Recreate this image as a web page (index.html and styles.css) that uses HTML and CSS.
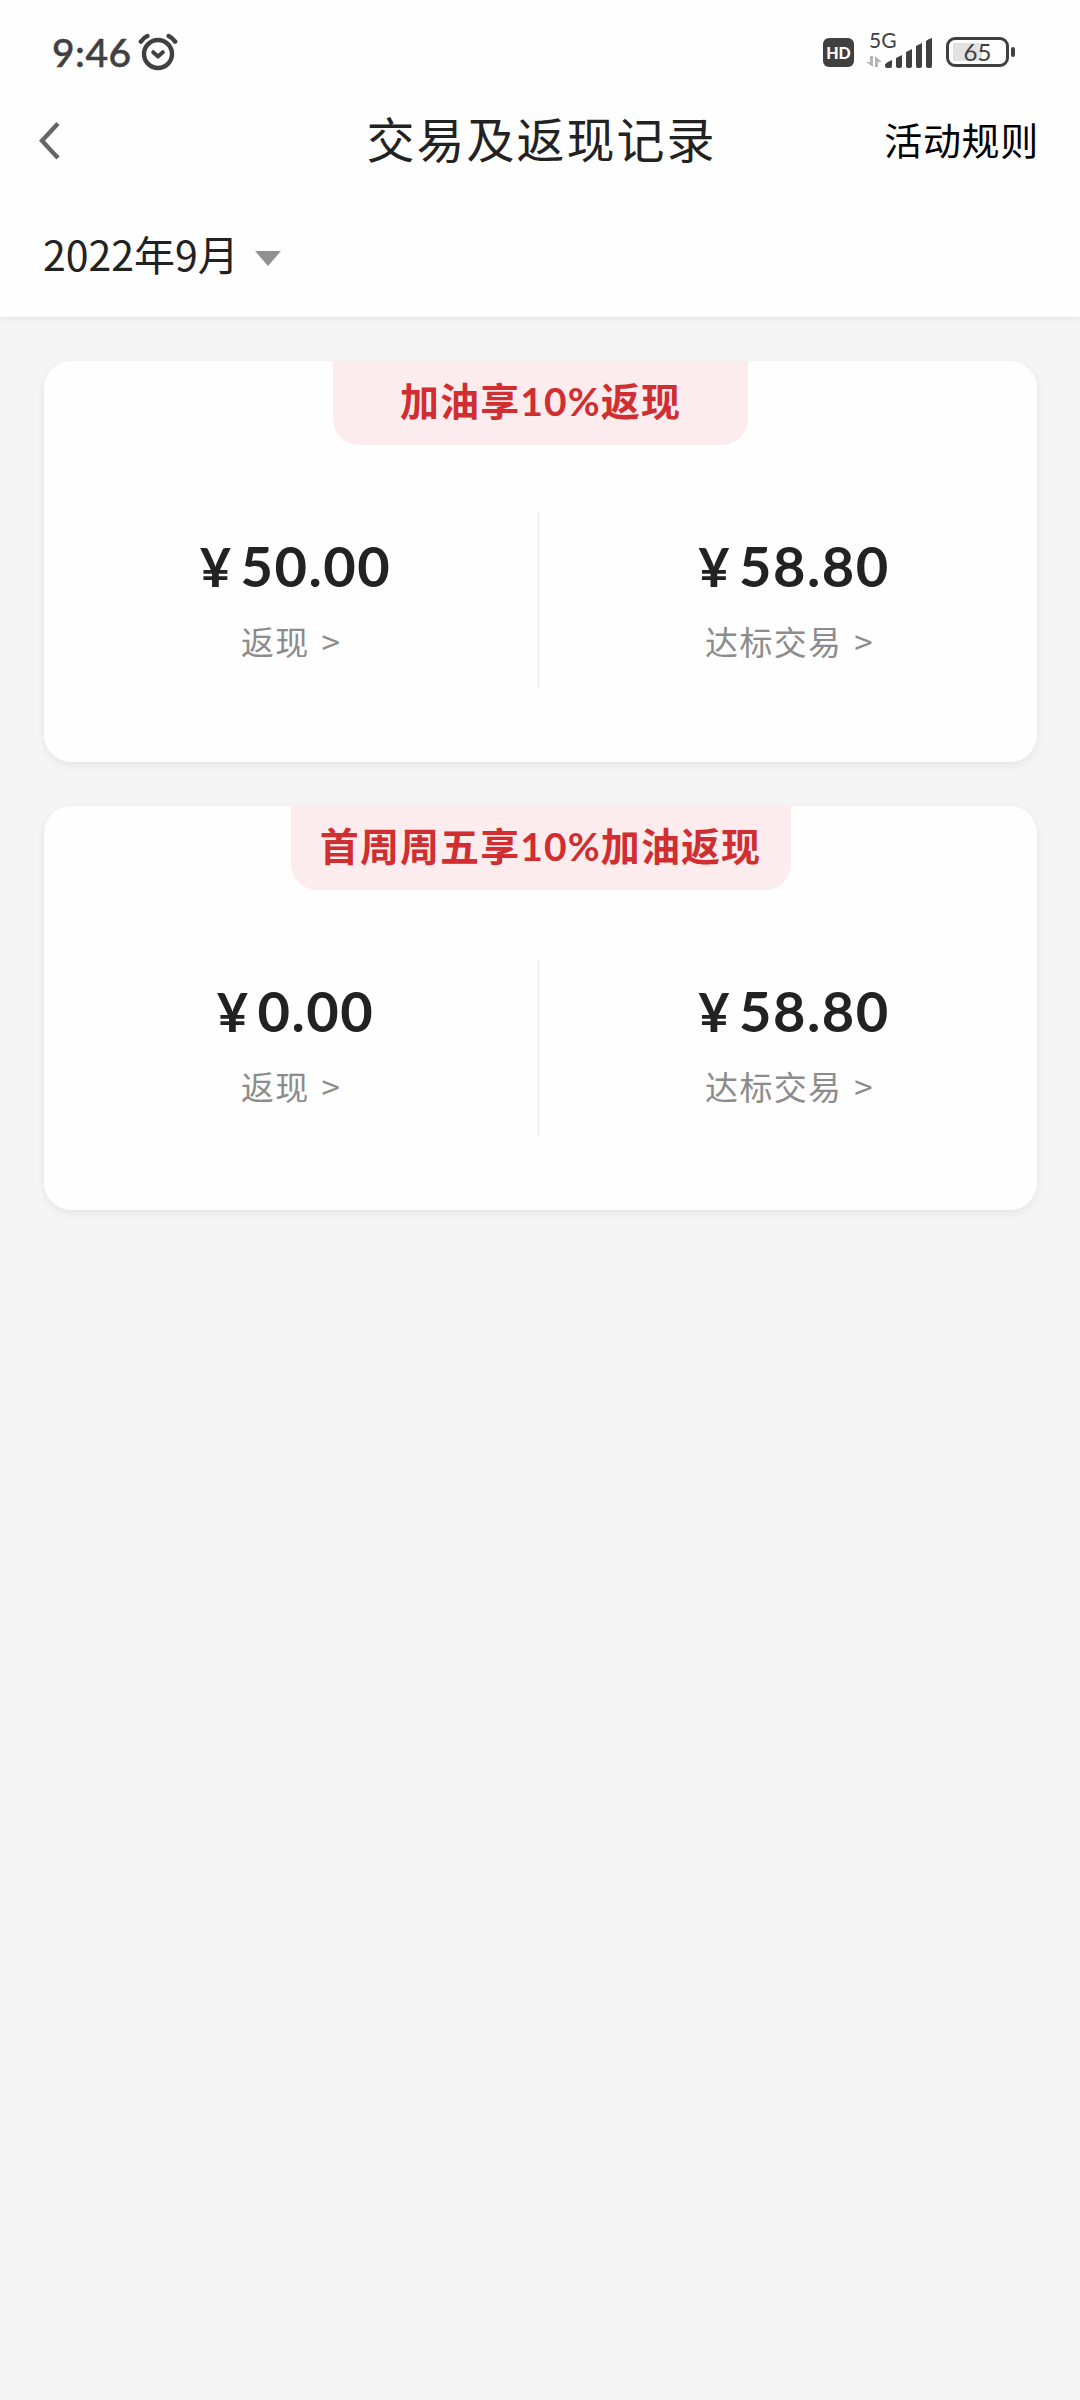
FILE: index.html
```html
<!DOCTYPE html>
<html lang="zh-CN">
<head>
<meta charset="utf-8">
<title>交易及返现记录</title>
<link rel="stylesheet" href="styles.css">
</head>
<body>
<header class="header">
  <div class="status">
    <span class="clock">9:46</span>
    <svg class="alarm" width="40" height="38" viewBox="0 0 40 38" fill="none" stroke="#404040" stroke-linecap="round" stroke-linejoin="round">
      <circle cx="20" cy="21" r="14" stroke-width="4.4"/>
      <path d="M15.2 19.2L20 23.4L24.8 19.2" stroke-width="4"/>
      <path d="M2.8 8.6Q6 4.4 9.4 3M37.2 8.6Q34 4.4 30.6 3" stroke-width="4.4"/>
    </svg>
    <span class="hd">HD</span>
    <span class="network">
      <span class="generation">5G</span>
      <svg width="68" height="32" viewBox="0 0 68 32">
        <path d="M0 24H4V18H7V29ZM9 29V18L16 24H12V29Z" fill="#b5b5b5"/>
        <path d="M19 30V27Q19 25 26 22V28Q26 30 24 30H21Q19 30 19 28ZM30 20L36 17V28Q36 30 34 30H32Q30 30 30 28ZM40 14L46 11V28Q46 30 44 30H42Q40 30 40 28ZM50 8L56 5V28Q56 30 54 30H52Q50 30 50 28ZM60 3Q62 1 66 0V28Q66 30 64 30H62Q60 30 60 28Z" fill="#404040"/>
      </svg>
    </span>
    <span class="battery"><span class="battery-shell">65</span><i class="battery-tip"></i></span>
  </div>
  <nav class="nav">
    <svg class="back" width="22" height="38" viewBox="0 0 22 38" fill="none" stroke="#666" stroke-width="4.4"><path d="M19 1.6L3 18.8L19 36"/></svg>
    <h1 class="title">交易及返现记录</h1>
    <a class="rules">活动规则</a>
  </nav>
  <div class="month">
    <span>2022年9月</span>
    <svg class="caret" width="26" height="15" viewBox="0 0 26 15"><path d="M0 0H26L13 15Z" fill="#919191"/></svg>
  </div>
</header>
<main class="list">
  <section class="card">
    <h2 class="badge">加油享<span class="pct">10%</span>返现</h2>
    <div class="columns">
      <div class="column"><p class="amount"><span class="yen">¥</span>50.00</p><p class="label">返现<span class="more">&gt;</span></p></div>
      <div class="column"><p class="amount"><span class="yen">¥</span>58.80</p><p class="label">达标交易<span class="more">&gt;</span></p></div>
    </div>
  </section>
  <section class="card card-second">
    <h2 class="badge">首周周五享<span class="pct">10%</span>加油返现</h2>
    <div class="columns">
      <div class="column"><p class="amount"><span class="yen">¥</span>0.00</p><p class="label">返现<span class="more">&gt;</span></p></div>
      <div class="column"><p class="amount"><span class="yen">¥</span>58.80</p><p class="label">达标交易<span class="more">&gt;</span></p></div>
    </div>
  </section>
</main>
</body>
</html>
```
FILE: styles.css
```css
* { box-sizing: border-box; margin: 0; padding: 0; }
body {
  min-height: 2400px;
  background: #f5f5f5;
  color: #222;
  font-family: "Noto Sans CJK SC", sans-serif;
}
.header {
  height: 317px;
  background: #fefefe;
  box-shadow: 0 2px 6px rgba(0, 0, 0, .07);
}
.status {
  display: flex;
  align-items: center;
  height: 104px;
  padding: 0 65px 0 52px;
  color: #404040;
}
.clock { width: 86px; font: 500 39px/50px Lato, sans-serif; letter-spacing: .5px; -webkit-text-stroke: .5px #404040; }
.alarm { margin-right: auto; }
.hd {
  width: 31px;
  height: 29px;
  margin-right: 12px;
  border-radius: 6px;
  background: #404040;
  color: #fff;
  font: 900 16px/29px Lato, sans-serif;
  text-align: center;
}
.network { display: flex; position: relative; width: 80px; height: 38px; align-items: flex-end; padding-bottom: 1px; }
.generation { position: absolute; left: 3px; top: -5px; font: 21px/24px Lato, sans-serif; }
.battery { display: flex; align-items: center; gap: 2px; }
.battery-shell {
  width: 63px;
  height: 30px;
  border: 3px solid #404040;
  border-radius: 9px;
  background: linear-gradient(#e2e2e2, #e2e2e2) 4px 3px / 29px 18px no-repeat;
  font: 24px/24px Lato, sans-serif;
  text-align: center;
}
.battery-tip { width: 4px; height: 10px; border-radius: 2px; background: #404040; }
.nav {
  display: grid;
  grid-template-columns: 200px 1fr 200px;
  align-items: center;
  height: 72px;
  padding: 0 41px 0 39px;
}
.back { margin-top: 1px; }
.title { margin-top: -6px; padding-left: 5px; font-size: 48px; line-height: 72px; font-weight: 400; letter-spacing: 2px; text-align: center; }
.rules { margin-top: -2px; color: #000; font-size: 38px; line-height: 72px; letter-spacing: .7px; text-align: right; white-space: nowrap; }
.month {
  display: flex;
  align-items: center;
  gap: 16px;
  height: 141px;
  padding: 12px 0 0 43px;
  font-size: 41px;
  line-height: 60px;
}
.caret { margin-top: 12px; }
.list { display: flex; flex-direction: column; gap: 44px; padding: 44px 43px 0 44px; }
.card {
  display: flex;
  flex-direction: column;
  align-items: center;
  height: 401px;
  border-radius: 27px;
  background: #fefefe;
  box-shadow: 0 3px 8px rgba(0, 0, 0, .07);
}
.card-second { height: 404px; }
.badge {
  width: 415px;
  height: 84px;
  border-radius: 0 0 26px 26px;
  background: #fdeced;
  color: #d02e31;
  font-size: 39px;
  line-height: 77px;
  font-weight: 700;
  letter-spacing: 1.1px;
  text-align: center;
  white-space: nowrap;
}
.card-second .badge { width: 500px; }
.columns { display: grid; grid-template-columns: 495px 1fr; width: 100%; height: 176px; margin-top: 67px; }
.card-second .columns { margin-top: 70px; }
.column { padding-top: 19px; padding-left: 3px; text-align: center; }
.column:first-child { padding-left: 0; border-right: 1px solid #ececec; }
.card-second .column { padding-top: 16px; }
.amount { padding-left: 9px; font: 700 56px/70px Lato, sans-serif; letter-spacing: 1.5px; }
.yen { margin-right: 8px; font-size: 54px; }
.label { padding-top: 15px; color: #8c8c8c; font-size: 33px; line-height: 48px; letter-spacing: 1.3px; }
.more { margin-left: 12px; }
.pct { font-family: Lato, sans-serif; }
```
